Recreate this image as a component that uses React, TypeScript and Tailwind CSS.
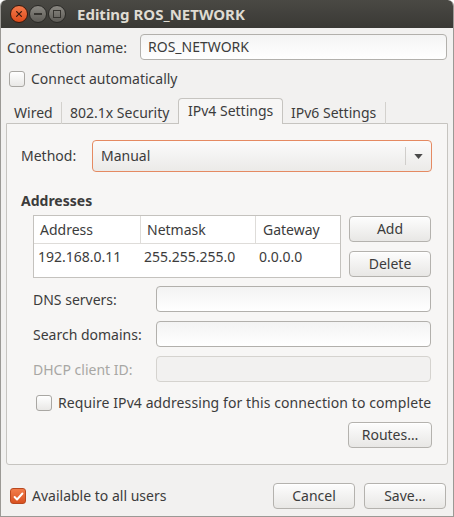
import type { ReactNode } from "react";

function Checkbox({ checked = false }: { checked?: boolean }) {
  if (checked) {
    return (
      <span className="flex h-4 w-4 shrink-0 items-center justify-center rounded-[3px] border border-[#b9481f] bg-gradient-to-b from-[#f27d4b] to-[#d9511f]">
        <svg viewBox="0 0 16 16" className="h-[13px] w-[13px]">
          <path d="M3.2 8.6l3 3.1 6.6-7.4" fill="none" stroke="#ffffff" strokeWidth="2.4" strokeLinecap="round" strokeLinejoin="round" />
        </svg>
      </span>
    );
  }
  return <span className="h-4 w-4 shrink-0 rounded-[3px] border border-[#a9a7a3] bg-gradient-to-b from-[#ffffff] to-[#e9e8e6]" />;
}

function Button({ children, className = "" }: { children: ReactNode; className?: string }) {
  return (
    <button
      type="button"
      className={`flex h-[26px] items-center justify-center rounded-[4px] border border-[#b4b2ae] bg-gradient-to-b from-[#fdfdfd] to-[#e8e7e5] text-[14px] text-[#3c3c3c] shadow-[inset_0_1px_0_#ffffff] ${className}`}
    >
      {children}
    </button>
  );
}

function Field({ label, disabled = false }: { label: string; disabled?: boolean }) {
  return (
    <div className="flex h-[26px] items-center">
      <span className={`w-[123px] pt-[2px] ${disabled ? "text-[#a8a7a4]" : "text-[#3c3c3c]"}`}>{label}</span>
      <div
        className={`h-[26px] w-[275px] rounded-[4px] border ${
          disabled ? "border-[#d5d3cf] bg-[#f2f1f0]" : "border-[#b2b0ac] bg-gradient-to-b from-[#f3f3f3] to-[#ffffff]"
        }`}
      />
    </div>
  );
}

function WindowButton({ kind }: { kind: "close" | "min" | "max" }) {
  if (kind === "close") {
    return (
      <span className="flex h-[18px] w-[18px] items-center justify-center rounded-full border border-[#3a1a0e] bg-gradient-to-b from-[#f47a4a] to-[#dd4a18]">
        <svg viewBox="0 0 10 10" className="h-[8px] w-[8px]">
          <path d="M2 2l6 6M8 2l-6 6" stroke="#3b1c10" strokeWidth="1.6" strokeLinecap="round" />
        </svg>
      </span>
    );
  }
  return (
    <span className="flex h-[18px] w-[18px] items-center justify-center rounded-full border border-[#2b2a27] bg-gradient-to-b from-[#8b8983] to-[#5d5b56]">
      {kind === "min" ? (
        <span className="h-[2px] w-[8px] bg-[#35332f]" />
      ) : (
        <span className="h-[8px] w-[8px] border-[1.5px] border-[#35332f]" />
      )}
    </span>
  );
}

export default function App() {
  return (
    <div className="h-[517px] w-[454px] bg-white font-['Noto_Sans',sans-serif] text-[14px] leading-[20px] text-[#3c3c3c]">
      <div className="flex h-full flex-col overflow-hidden rounded-t-[6px] border-x border-b border-[#9b9995] bg-[#f2f1f0]">
        {/* title bar */}
        <div className="-mx-px flex h-[28px] shrink-0 items-center gap-[1px] rounded-t-[6px] bg-gradient-to-b from-[#4a4944] to-[#3a3935] pl-[10px]">
          <WindowButton kind="close" />
          <WindowButton kind="min" />
          <WindowButton kind="max" />
          <span className="ml-[10px] text-[15px] font-bold text-[#dfdbd2]">Editing ROS_NETWORK</span>
        </div>

        <div className="flex flex-1 flex-col px-[5px]">
          <div className="mt-[6px] flex h-[26px] items-center">
            <span className="ml-[1px] pt-[1px]">Connection name:</span>
            <div className="ml-auto mr-[1px] flex h-[26px] w-[307px] items-center rounded-[4px] border border-[#b2b0ac] bg-gradient-to-b from-[#f4f4f4] to-[#ffffff] pl-[7px]">
              ROS_NETWORK
            </div>
          </div>

          <div className="mt-[11px] flex h-4 items-center gap-[6px] pl-[3px]">
            <Checkbox />
            <span>Connect automatically</span>
          </div>

          {/* tabs */}
          <div className="relative z-10 mt-[11px] flex h-[26px] items-end">
            <div className="flex h-[22px] w-[56px] items-center border-r border-[#d3d1cd] pl-[8px]">Wired</div>
            <div className="flex h-[22px] w-[116px] items-center pl-[8px]">802.1x Security</div>
            <div className="flex h-[26px] w-[105px] items-start rounded-t-[4px] border-x border-t border-[#c6c4c0] bg-[#f7f6f5] pl-[9px] pt-[2px]">
              IPv4 Settings
            </div>
            <div className="flex h-[22px] w-[103px] items-center border-r border-[#d3d1cd] pl-[8px]">IPv6 Settings</div>
          </div>

          <div className="-mt-px flex flex-col rounded-b-[3px] border border-[#c6c4c0] bg-[#f7f6f5] pb-[16px] pl-[14px] pr-[15px] pt-[16px]">
            <div className="flex h-[32px] items-center">
              <span className="w-[71px]">Method:</span>
              <div className="flex h-[32px] flex-1 items-center rounded-[4px] border border-[#e58a62] bg-gradient-to-b from-[#fbfbfb] to-[#ebeae8] pl-[8px]">
                <span className="flex-1">Manual</span>
                <span className="h-[18px] w-px bg-[#d0cecb]" />
                <svg viewBox="0 0 10 6" className="mx-[8px] h-[5px] w-[9px]">
                  <path d="M0 0h10L5 6z" fill="#4a4a4a" />
                </svg>
              </div>
            </div>

            <div className="mt-[19px] font-bold">Addresses</div>

            <div className="mt-[4px] flex pl-[12px]">
              <div className="flex h-[63px] w-[308px] flex-col border border-[#c4c2be] bg-white">
                <div className="flex h-[28px] border-b border-[#dedcd9]">
                  <div className="flex w-[107px] items-center border-r border-[#dedcd9] pl-[6px]">Address</div>
                  <div className="flex w-[115px] items-center border-r border-[#dedcd9] pl-[6px]">Netmask</div>
                  <div className="flex flex-1 items-center pl-[7px]">Gateway</div>
                </div>
                <div className="flex h-[26px]">
                  <div className="flex w-[107px] items-center pl-[4px]">192.168.0.11</div>
                  <div className="flex w-[115px] items-center pl-[3px]">255.255.255.0</div>
                  <div className="flex flex-1 items-center pl-[3px]">0.0.0.0</div>
                </div>
              </div>
              <div className="ml-[8px] mt-[1px] flex flex-col gap-[9px]">
                <Button className="w-[82px]">Add</Button>
                <Button className="w-[82px]">Delete</Button>
              </div>
            </div>

            <div className="mt-[8px] flex flex-col gap-[9px] pl-[12px]">
              <Field label="DNS servers:" />
              <Field label="Search domains:" />
              <Field label="DHCP client ID:" disabled />
            </div>

            <div className="mt-[13px] flex h-4 items-center gap-[6px] pl-[15px]">
              <Checkbox />
              <span className="whitespace-nowrap tracking-[0.09px]">Require IPv4 addressing for this connection to complete</span>
            </div>

            <div className="mt-[11px] flex justify-end">
              <Button className="w-[84px]">Routes…</Button>
            </div>
          </div>

          <div className="mt-[18px] flex items-center">
            <div className="ml-[4px] flex items-center gap-[6px]">
              <Checkbox checked />
              <span>Available to all users</span>
            </div>
            <div className="ml-auto mr-[2px] flex gap-[9px]">
              <Button className="w-[82px]">Cancel</Button>
              <Button className="w-[82px]">Save…</Button>
            </div>
          </div>
        </div>
      </div>
    </div>
  );
}
